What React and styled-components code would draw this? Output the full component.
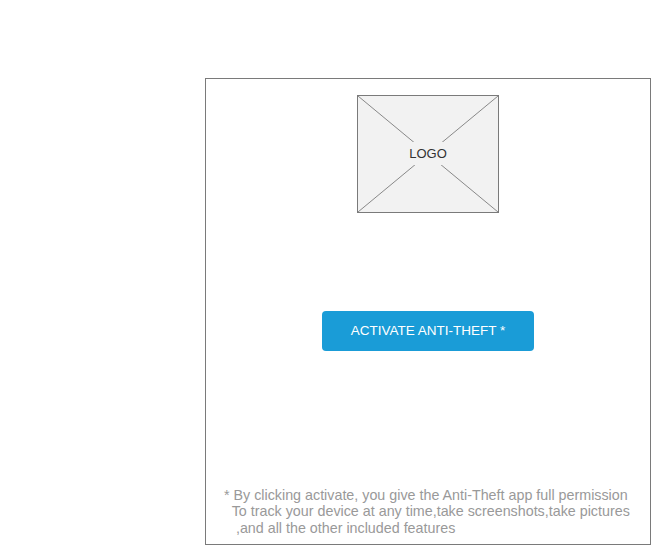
import React from "react";
import styled, { createGlobalStyle } from "styled-components";

const GlobalStyle = createGlobalStyle`
  html, body {
    margin: 0;
    padding: 0;
    background: #ffffff;
    font-family: "Liberation Sans", Arial, sans-serif;
  }
`;

function App() {
  return (
    <>
      <GlobalStyle />
      <Page>
        <Frame>
          <LogoBox>
            <svg width="140" height="116" viewBox="0 0 140 116">
              <line x1="0" y1="0" x2="140" y2="116" stroke="#888" strokeWidth="1" />
              <line x1="140" y1="0" x2="0" y2="116" stroke="#888" strokeWidth="1" />
            </svg>
            <LogoLabel>LOGO</LogoLabel>
          </LogoBox>
          <ActivateButton>ACTIVATE ANTI-THEFT *</ActivateButton>
          <Footnote>
            {"* By clicking activate, you give the Anti-Theft app full permission\n  To track your device at any time,take screenshots,take pictures\n   ,and all the other included features"}
          </Footnote>
        </Frame>
      </Page>
    </>
  );
}

export default App;

const Page = styled.div`
  width: 651px;
  height: 545px;
  padding: 78px 0 0 205px;
  box-sizing: border-box;
  overflow: hidden;
`;

const Frame = styled.div`
  width: 446px;
  height: 467px;
  box-sizing: border-box;
  border: 1px solid #7a7a7a;
  display: flex;
  flex-direction: column;
  align-items: center;
  padding-top: 16px;
`;

const LogoBox = styled.div`
  position: relative;
  width: 142px;
  height: 118px;
  box-sizing: border-box;
  border: 1px solid #7a7a7a;
  background: #f2f2f2;
  display: flex;
  align-items: center;
  justify-content: center;

  svg {
    position: absolute;
    left: 0;
    top: 0;
  }
`;

const LogoLabel = styled.span`
  position: relative;
  top: -1px;
  background: #f2f2f2;
  padding: 4px 2px;
  font-size: 13px;
  color: #333333;
`;

const ActivateButton = styled.button`
  margin-top: 98px;
  width: 212px;
  height: 40px;
  padding: 0 0 2px;
  border: none;
  border-radius: 4px;
  background: #1a9cd7;
  color: #ffffff;
  font-family: "Liberation Sans", Arial, sans-serif;
  font-size: 13.5px;
  cursor: pointer;
`;

const Footnote = styled.div`
  margin-top: auto;
  align-self: stretch;
  padding: 0 0 8px 18px;
  white-space: pre;
  font-size: 14.3px;
  line-height: 16.5px;
  color: #999999;
`;
